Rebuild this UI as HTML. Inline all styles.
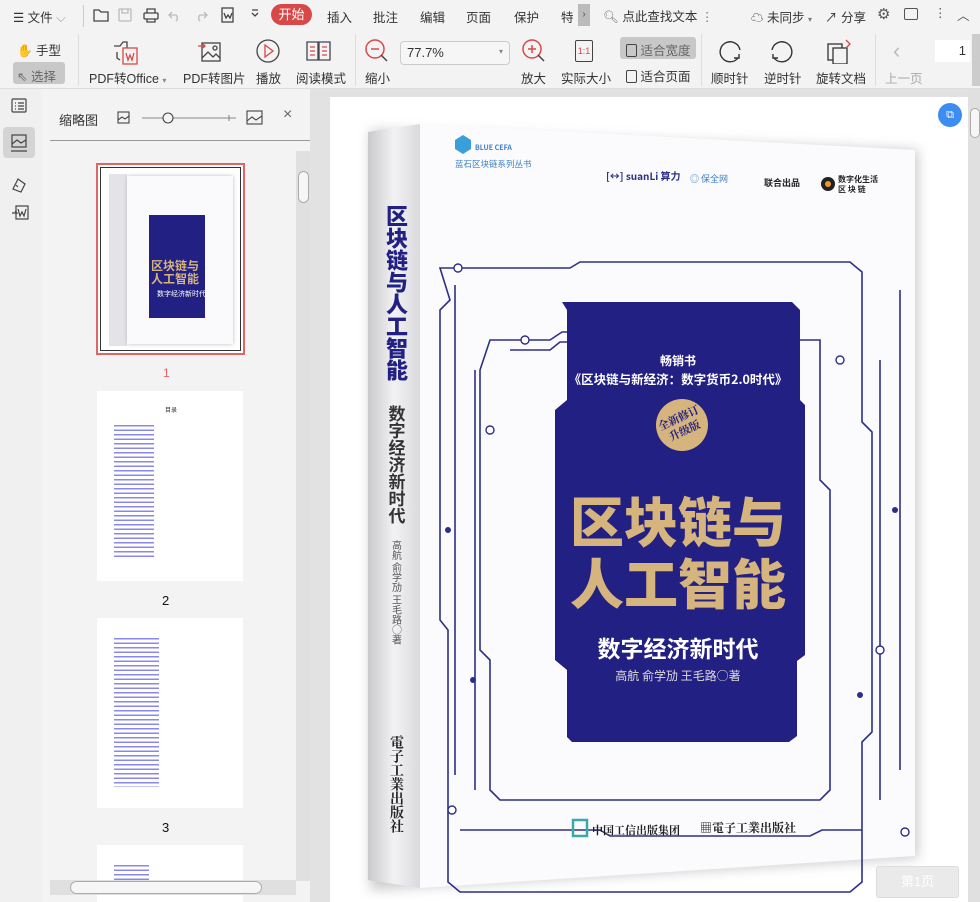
<!DOCTYPE html>
<html><head><meta charset="utf-8"><style>
*{margin:0;padding:0;box-sizing:border-box}
body{width:980px;height:902px;overflow:hidden;background:#f3f3f3;font-family:"Liberation Sans","Noto Sans CJK SC",sans-serif;font-size:12px;color:#333;position:relative}
.a{position:absolute;white-space:nowrap}
.t{font-size:12.5px;color:#333}
.g{color:#aaa}
</style></head><body>
<div class="a" style="left:0;top:0;width:980px;height:30px;background:#f3f3f3"></div>
<div class="a t" style="left:13px;top:7px">☰ 文件 <span style="color:#999">⌵</span></div>
<div class="a" style="left:83px;top:5px;width:1px;height:22px;background:#ccc"></div>
<svg class="a" style="left:92px;top:6px" width="200" height="18" fill="none" stroke="#444" stroke-width="1.3">
<path d="M2 4h5l2 2h7v9H2z"/><g stroke="#bbb"><rect x="27" y="3" width="12" height="12" rx="1"/><path d="M30 3v4h6V3"/></g>
<rect x="52" y="7" width="14" height="6" rx="1"/><path d="M55 7V3h8v4M55 13v3h8v-3"/>
<path stroke="#bbb" d="M80 6l-3 3 3 3M77 9h7a4 4 0 010 6"/><path stroke="#bbb" d="M112 6l3 3-3 3M115 9h-7a4 4 0 000 6"/>
<rect x="130" y="2" width="11" height="14"/><path d="M132 7l2 5 2-3 2 3 2-5"/>
<path d="M160 7l3 3 3-3M160 4h6"/></svg>
<div class="a" style="left:271px;top:4px;width:41px;height:21px;border-radius:11px;background:#d94848;color:#fff;font-size:13px;text-align:center;line-height:21px">开始</div>
<div class="a t" style="left:327px;top:7px">插入</div><div class="a t" style="left:373px;top:7px">批注</div><div class="a t" style="left:420px;top:7px">编辑</div><div class="a t" style="left:466px;top:7px">页面</div><div class="a t" style="left:514px;top:7px">保护</div><div class="a t" style="left:561px;top:7px">特</div>
<div class="a" style="left:578px;top:4px;width:12px;height:22px;background:#bbb;color:#555;text-align:center;line-height:22px;font-size:10px">›</div>
<div class="a t" style="left:603px;top:6px"><span style="color:#777">🔍︎</span> 点此查找文本 <span style="color:#777">⋮</span></div>
<div class="a t" style="left:751px;top:7px">☁ 未同步 <span style="font-size:8px;color:#777">▾</span></div>
<div class="a t" style="left:825px;top:7px">↗ 分享</div>
<div class="a t" style="left:877px;top:5px;font-size:15px;color:#555">⚙</div>
<div class="a" style="left:904px;top:8px;width:14px;height:12px;border:1.3px solid #555;border-radius:2px"></div>
<div class="a t" style="left:934px;top:5px;color:#555">⋮</div><div class="a t" style="left:957px;top:5px;color:#555">︿</div>
<div class="a t" style="left:17px;top:40px">✋ 手型</div>
<div class="a" style="left:13px;top:62px;width:52px;height:22px;background:#c8c8c8;border-radius:3px"></div>
<div class="a t" style="left:17px;top:66px;color:#666">⇖ 选择</div>
<div class="a" style="left:78px;top:34px;width:1px;height:52px;background:#ddd"></div>
<svg class="a" style="left:112px;top:38px" width="30" height="28" fill="none" stroke-width="1.3"><path stroke="#444" d="M2 8h6l3-4h4v6M5 14v6l3 2"/><rect x="11" y="10" width="14" height="16" stroke="#d94848"/><path stroke="#d94848" d="M14 15l2 7 2-5 2 5 2-7"/></svg>
<div class="a t" style="left:89px;top:68px">PDF转Office <span style="font-size:8px;color:#888">▾</span></div>
<svg class="a" style="left:198px;top:38px" width="26" height="26" fill="none" stroke="#444" stroke-width="1.3"><rect x="4" y="5" width="18" height="18"/><path d="M4 20l6-6 5 5 3-3 4 4"/><circle cx="17" cy="10" r="2"/><path stroke="#d94848" d="M0 8h7M5 6l2 2-2 2"/></svg>
<div class="a t" style="left:183px;top:68px">PDF转图片</div>
<svg class="a" style="left:255px;top:38px" width="26" height="26" fill="none" stroke-width="1.3"><circle cx="13" cy="13" r="11" stroke="#444"/><path stroke="#d94848" d="M10 7l8 6-8 6z"/></svg>
<div class="a t" style="left:256px;top:68px">播放</div>
<svg class="a" style="left:306px;top:40px" width="26" height="22" fill="none" stroke="#445" stroke-width="1.3"><path d="M1 2h11v18H1zM13 2h11v18H13z"/><path stroke="#d94848" d="M4 7h5M4 11h5M4 15h5M16 7h5M16 11h5M16 15h5"/></svg>
<div class="a t" style="left:296px;top:68px">阅读模式</div>
<div class="a" style="left:355px;top:34px;width:1px;height:52px;background:#ddd"></div>
<svg class="a" style="left:364px;top:38px" width="26" height="26" fill="none" stroke-width="1.5"><circle cx="11" cy="11" r="9" stroke="#d94848"/><path stroke="#d94848" d="M7 11h8"/><path stroke="#444" d="M17 17l6 6"/></svg>
<div class="a t" style="left:365px;top:68px">缩小</div>
<div class="a" style="left:400px;top:41px;width:110px;height:24px;border:1px solid #ccc;border-radius:4px;background:#f6f6f6;padding:3px 6px;font-size:13px">77.7%</div>
<div class="a" style="left:499px;top:47px;font-size:8px;color:#888">▾</div>
<svg class="a" style="left:521px;top:38px" width="26" height="26" fill="none" stroke-width="1.5"><circle cx="11" cy="11" r="9" stroke="#d94848"/><path stroke="#d94848" d="M7 11h8M11 7v8"/><path stroke="#444" d="M17 17l6 6"/></svg>
<div class="a t" style="left:521px;top:68px">放大</div>
<div class="a" style="left:575px;top:40px;width:18px;height:22px;border:1.3px solid #444;border-radius:2px;font-size:9px;color:#d94848;text-align:center;line-height:20px">1:1</div>
<div class="a t" style="left:561px;top:68px">实际大小</div>
<div class="a" style="left:620px;top:37px;width:76px;height:22px;background:#c8c8c8;border-radius:3px"></div>
<div class="a t" style="left:626px;top:40px;color:#666"><span style="display:inline-block;width:11px;height:13px;border:1.3px solid #444;border-radius:2px;vertical-align:-2px"></span> 适合宽度</div>
<div class="a t" style="left:626px;top:66px"><span style="display:inline-block;width:11px;height:13px;border:1.3px solid #444;border-radius:2px;vertical-align:-2px"></span> 适合页面</div>
<div class="a" style="left:701px;top:34px;width:1px;height:52px;background:#ddd"></div>
<svg class="a" style="left:718px;top:40px" width="26" height="24" fill="none" stroke="#333" stroke-width="1.4"><path d="M20 18A10 10 0 1 1 22 10"/><path d="M16 18h5v-4"/></svg>
<div class="a t" style="left:711px;top:68px">顺时针</div>
<svg class="a" style="left:768px;top:40px" width="26" height="24" fill="none" stroke="#333" stroke-width="1.4"><path d="M6 18A10 10 0 1 0 4 10"/><path d="M10 18H5v-4"/></svg>
<div class="a t" style="left:764px;top:68px">逆时针</div>
<svg class="a" style="left:826px;top:38px" width="28" height="26" fill="none" stroke="#333" stroke-width="1.3"><rect x="2" y="6" width="14" height="16"/><rect x="7" y="10" width="14" height="16" fill="#f3f3f3"/><path stroke="#d94848" d="M20 2l4 4-4 4"/></svg>
<div class="a t" style="left:816px;top:68px">旋转文档</div>
<div class="a" style="left:875px;top:34px;width:1px;height:52px;background:#ddd"></div>
<div class="a" style="left:893px;top:38px;font-size:22px;color:#bbb">‹</div>
<div class="a t g" style="left:885px;top:68px">上一页</div>
<div class="a" style="left:935px;top:40px;width:35px;height:22px;background:#fff;text-align:right;padding:3px 4px;font-size:13px">1</div>
<div class="a" style="left:972px;top:34px;width:8px;height:52px;background:#ccc"></div>
<div class="a" style="left:0;top:88px;width:980px;height:1px;background:#ddd"></div>
<div class="a" style="left:0;top:89px;width:42px;height:813px;background:#f0f0f0"></div>
<div class="a" style="left:3px;top:127px;width:32px;height:31px;background:#d4d4d4;border-radius:4px"></div>
<svg class="a" style="left:10px;top:97px" width="20" height="140" fill="none" stroke="#444" stroke-width="1.2"><rect x="2" y="2" width="14" height="13" rx="1"/><path d="M5 6h1M8 6h6M5 9h1M8 9h6M5 12h1M8 12h6"/><rect x="2" y="38" width="14" height="12"/><path d="M2 47l5-4 4 3 5-3M1 54h16"/><path d="M3 92l5-10 7 5-4 8z M6 88l2 2"/><rect x="6" y="109" width="12" height="13"/><path d="M2 116h5l-2-2M8 112l2 7 2-4 2 4 2-7"/></svg>
<div class="a" style="left:59px;top:110px;font-size:13px">缩略图</div>
<svg class="a" style="left:116px;top:110px" width="150" height="16" fill="none" stroke="#444" stroke-width="1.1"><rect x="2" y="2" width="11" height="11"/><path d="M2 10l4-3 3 2 4-3"/><path stroke="#888" d="M26 8h94M113 5v6"/><circle cx="52" cy="8" r="5" fill="#f3f3f3"/><rect x="131" y="1" width="15" height="13"/><path d="M131 11l5-4 4 3 6-4"/></svg>
<div class="a" style="left:283px;top:106px;font-size:16px;color:#666">×</div>
<div class="a" style="left:50px;top:140px;width:260px;height:1px;background:#999"></div>
<div class="a" style="left:96px;top:163px;width:149px;height:192px;border:2px solid #e06666;background:#fff;padding:2px">
<div style="width:100%;height:100%;border:1px solid #333;position:relative;background:#fff">
<div style="position:absolute;left:8px;top:6px;width:18px;height:172px;background:#e4e4e8"></div>
<div style="position:absolute;left:26px;top:8px;width:106px;height:168px;background:#fafafc;box-shadow:0 0 4px #bbb"></div>
<div style="position:absolute;left:48px;top:47px;width:56px;height:103px;background:#232083"></div>
<div style="position:absolute;left:50px;top:92px;color:#d6b47e;font-weight:bold;font-size:12px;line-height:13px">区块链与<br>人工智能</div>
<div style="position:absolute;left:56px;top:121px;color:#fff;font-size:7px">数字经济新时代</div>
</div></div>
<div class="a" style="left:163px;top:366px;color:#e06666;font-size:12px">1</div>
<div class="a" style="left:97px;top:391px;width:146px;height:190px;background:#fff"></div>
<div class="a" style="left:165px;top:405px;font-size:6px">目录</div>
<div class="a" style="left:114px;top:422px;width:40px;height:136px;background:repeating-linear-gradient(#fff 0,#fff 3px,#6a6ae8 3px,#6a6ae8 4.5px);opacity:.8"></div>
<div class="a" style="left:162px;top:593px;font-size:13px;color:#111">2</div>
<div class="a" style="left:97px;top:618px;width:146px;height:190px;background:#fff"></div>
<div class="a" style="left:114px;top:635px;width:45px;height:152px;background:repeating-linear-gradient(#fff 0,#fff 3px,#6a6ae8 3px,#6a6ae8 4.5px);opacity:.8"></div>
<div class="a" style="left:162px;top:820px;font-size:13px;color:#111">3</div>
<div class="a" style="left:97px;top:845px;width:146px;height:57px;background:#fff"></div>
<div class="a" style="left:114px;top:862px;width:35px;height:18px;background:repeating-linear-gradient(#fff 0,#fff 3px,#6a6ae8 3px,#6a6ae8 4.5px);opacity:.8"></div>
<div class="a" style="left:296px;top:151px;width:14px;height:730px;background:#e0e0e0"></div>
<div class="a" style="left:298px;top:171px;width:11px;height:32px;border:1px solid #aaa;border-radius:6px;background:#f6f6f6"></div>
<div class="a" style="left:50px;top:880px;width:246px;height:15px;background:#e0e0e0"></div>
<div class="a" style="left:70px;top:881px;width:192px;height:13px;border:1px solid #aaa;border-radius:7px;background:#f6f6f6"></div>
<div class="a" style="left:310px;top:89px;width:670px;height:813px;background:#e2e2e2"></div>
<div class="a" style="left:330px;top:97px;width:638px;height:805px;background:#fff"></div>
<div class="a" style="left:968px;top:89px;width:12px;height:813px;background:#e0e0e0"></div>
<div class="a" style="left:970px;top:108px;width:10px;height:30px;border:1px solid #aaa;border-radius:5px;background:#f6f6f6"></div>
<svg class="a" style="left:340px;top:110px" width="600" height="790" font-family="Noto Sans CJK SC,sans-serif">
<defs><linearGradient id="sp" x1="0" x2="1"><stop offset="0" stop-color="#c9c9cc"/><stop offset=".5" stop-color="#f2f2f4"/><stop offset="1" stop-color="#dadade"/></linearGradient>
<filter id="sh"><feGaussianBlur stdDeviation="6"/></filter></defs>
<polygon points="30,20 578,40 578,748 30,780" fill="#999" opacity=".5" filter="url(#sh)"/>
<polygon points="28,22 80,14 80,778 28,770" fill="url(#sp)"/>
<polygon points="80,14 575,40 575,746 80,778" fill="#fbfbfd"/>
<g fill="none" stroke="#2c2f88" stroke-width="1.6">
<path d="M100 158h130l10-6h270l12 10v150l10 10v300l-10 10v140l-12 10H120l-12-10V520l-8-10V200l10-10z"/>
<path d="M150 230h60l12-8h200l10 8h48v140l10 10v300l-10 10H160l-10-10V550l-10-10V260z"/>
<path d="M170 240h40l10-8h170l10 8h30M120 720h140l10 6h200l12-6h40"/>
<path d="M115 175v490M560 180v480M135 260v420M540 250v440"/>
</g>
<g fill="#2c2f88"><circle cx="133" cy="570" r="3"/><circle cx="520" cy="585" r="3"/><circle cx="555" cy="400" r="3"/><circle cx="108" cy="420" r="3"/></g>
<g fill="#fff" stroke="#2c2f88" stroke-width="1.4"><circle cx="118" cy="158" r="4"/><circle cx="185" cy="230" r="4"/><circle cx="500" cy="250" r="4"/><circle cx="150" cy="320" r="4"/><circle cx="540" cy="540" r="4"/><circle cx="112" cy="700" r="4"/><circle cx="565" cy="722" r="4"/></g>
<path d="M222 192h230l8 8v90l5 5v250l-8 6v75l-8 6H232l-5-5V560l-12-10V300l12-10V200z" fill="#232083"/>
<circle cx="342" cy="315" r="26" fill="#d6b47e"/>
<text x="342" y="311" fill="#232083" font-size="11" font-weight="bold" text-anchor="middle" font-family="Noto Serif CJK SC,serif" transform="rotate(-25 342 315)">全新修订</text>
<text x="342" y="325" fill="#232083" font-size="11" font-weight="bold" text-anchor="middle" font-family="Noto Serif CJK SC,serif" transform="rotate(-25 342 315)">升级版</text>
<text x="338" y="255" fill="#fff" font-size="12" font-weight="bold" text-anchor="middle">畅销书</text>
<text x="338" y="274" fill="#fff" font-size="12.5" font-weight="bold" text-anchor="middle">《区块链与新经济：数字货币2.0时代》</text>
<text x="338" y="432" fill="#d6b47e" font-size="54" font-weight="900" text-anchor="middle">区块链与</text>
<text x="338" y="494" fill="#d6b47e" font-size="54" font-weight="900" text-anchor="middle">人工智能</text>
<text x="338" y="547" fill="#fff" font-size="23" font-weight="bold" text-anchor="middle">数字经济新时代</text>
<text x="338" y="570" fill="#ddd" font-size="12" text-anchor="middle">高航  俞学劢  王毛路○著</text>
<text x="57" y="95" fill="#232083" font-size="22" font-weight="900" writing-mode="tb">区块链与人工智能</text>
<text x="57" y="295" fill="#333" font-size="17" font-weight="bold" writing-mode="tb">数字经济新时代</text>
<text x="57" y="430" fill="#555" font-size="10" writing-mode="tb">高航 俞学劢 王毛路○著</text>
<text x="57" y="625" fill="#222" font-size="14" font-weight="bold" font-family="Noto Serif CJK SC,serif" writing-mode="tb">電子工業出版社</text>
<path d="M115 30l8-5 8 5v9l-8 5-8-5z" fill="#3a9fd8"/>
<text x="135" y="40" fill="#3a7fc8" font-size="7" font-weight="bold">BLUE CEFA</text>
<text x="115" y="57" fill="#3a7fc8" font-size="8.5">蓝石区块链系列丛书</text>
<text x="266" y="70" fill="#2c2f88" font-size="10" font-weight="bold">[↔] suanLi 算力</text>
<text x="350" y="72" fill="#3a7fc8" font-size="9">◎ 保全网</text>
<text x="424" y="76" fill="#222" font-size="9" font-weight="bold">联合出品</text>
<circle cx="488" cy="74" r="7" fill="#222"/><circle cx="488" cy="74" r="3" fill="#e89b2c"/>
<text x="498" y="72" fill="#222" font-size="8" font-weight="bold">数字化生活</text>
<text x="498" y="82" fill="#222" font-size="8" font-weight="bold">区 块 链</text>
<rect x="233" y="710" width="14" height="16" fill="none" stroke="#3aaaa8" stroke-width="2.5"/>
<text x="252" y="724" fill="#222" font-size="11" font-weight="bold" font-family="Noto Serif CJK SC,serif">中国工信出版集团</text>
<text x="360" y="722" fill="#222" font-size="12" font-weight="bold" font-family="Noto Serif CJK SC,serif">▦電子工業出版社</text>
</svg>
<div class="a" style="left:938px;top:103px;width:24px;height:24px;border-radius:50%;background:#3d8df0;color:#fff;text-align:center;font-size:11px;line-height:24px">⧉</div>
<div class="a" style="left:876px;top:866px;width:83px;height:32px;border:1px solid #ddd;border-radius:3px;background:#eaeaea;color:#fff;text-align:center;line-height:30px;font-size:13px">第1页</div>
</body></html>
